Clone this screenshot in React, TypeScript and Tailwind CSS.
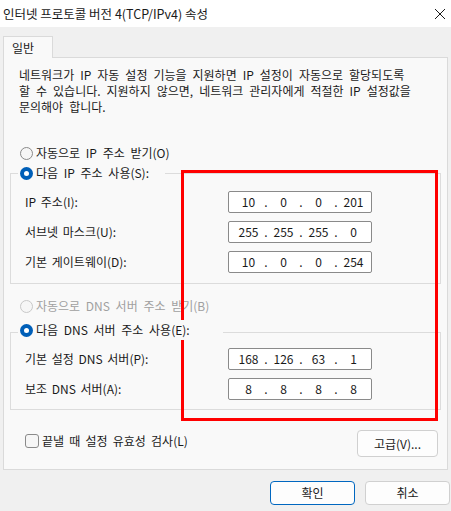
import React from "react";

const font = { fontFamily: '"Noto Sans CJK KR", "Noto Sans", sans-serif' };

function Radio({ checked, disabled }: { checked?: boolean; disabled?: boolean }) {
  if (checked) {
    return (
      <span className="w-[13px] h-[13px] rounded-full bg-[#005fb8] flex items-center justify-center shrink-0">
        <span className="w-[5px] h-[5px] rounded-full bg-white" />
      </span>
    );
  }
  return (
    <span
      className={
        "w-[13px] h-[13px] rounded-full border bg-[#f6f6f6] shrink-0 " +
        (disabled ? "border-[#c8c8c8]" : "border-[#8a8a8a]")
      }
    />
  );
}

function IpBox({ parts }: { parts: string[] }) {
  return (
    <div className="w-[144px] h-[22px] bg-white border border-[#8a8a8a] rounded-[2px] flex items-center pl-[4px] text-[12px] text-[#1a1a1a] [word-spacing:0px]">
      {parts.map((p, i) => (
        <React.Fragment key={i}>
          <span className="w-[31px] text-center">{p}</span>
          {i < 3 && <span className="w-[4px] text-center">.</span>}
        </React.Fragment>
      ))}
    </div>
  );
}

function Row({ label, parts }: { label: string; parts: string[] }) {
  return (
    <div className="flex items-center h-[22px]">
      <span className="w-[217px] pl-[14px] whitespace-nowrap [word-spacing:2px]">{label}</span>
      <IpBox parts={parts} />
    </div>
  );
}

function Legend({ text, gap }: { text: string; gap: string }) {
  return (
    <div className="relative z-10 flex items-center h-[20px] pl-[8px]">
      <span className={"flex items-center h-[20px] bg-[#f9f9f9] pl-[2px] " + gap}>
        <Radio checked />
        <span className="ml-[3px] whitespace-nowrap [word-spacing:3px]">{text}</span>
      </span>
    </div>
  );
}

export default function App() {
  return (
    <div
      className="w-[451px] h-[511px] bg-[#f0f0f0] relative overflow-hidden text-[12px] text-[#1a1a1a] leading-[16px]"
      style={font}
    >
      {/* title bar */}
      <div className="h-[27px] bg-white flex items-center justify-between pl-[3px] pr-[3px]">
        <span className="text-[12.5px] whitespace-nowrap">인터넷 프로토콜 버전 4(TCP/IPv4) 속성</span>
        <svg width="12" height="12" viewBox="0 0 12 12" className="mr-[2px]">
          <path d="M1 1 L11 11 M11 1 L1 11" stroke="#1a1a1a" strokeWidth="1" />
        </svg>
      </div>

      <div className="px-[3px] pt-[9px]">
        {/* tab */}
        <div className="relative z-10 w-[50px] h-[22px] bg-[#f9f9f9] border border-b-0 border-[#dadada] flex items-center pl-[8px] -mb-px">
          일반
        </div>

        {/* panel */}
        <div className="h-[413px] bg-[#f9f9f9] border border-[#dadada] pt-[9px]">
          <div className="pl-[15px] whitespace-nowrap [word-spacing:3.3px]">
            <div>네트워크가 IP 자동 설정 기능을 지원하면 IP 설정이 자동으로 할당되도록</div>
            <div>할 수 있습니다. 지원하지 않으면, 네트워크 관리자에게 적절한 IP 설정값을</div>
            <div>문의해야 합니다.</div>
          </div>

          <div className="mt-[28px] h-[20px] flex items-center pl-[16px] [word-spacing:3px]">
            <Radio />
            <span className="ml-[3px]">자동으로 IP 주소 받기(O)</span>
          </div>

          <div className="px-[6px]">
            <Legend text="다음 IP 주소 사용(S):" gap="pr-[16px]" />
            <div className="-mt-[10px] h-[111px] border border-[#dcdcdc] pt-[17px] flex flex-col gap-[8px]">
              <Row label="IP 주소(I):" parts={["10", "0", "0", "201"]} />
              <Row label="서브넷 마스크(U):" parts={["255", "255", "255", "0"]} />
              <Row label="기본 게이트웨이(D):" parts={["10", "0", "0", "254"]} />
            </div>
          </div>

          <div className="mt-[12px] h-[20px] flex items-center pl-[16px] text-[#a0a0a0] [word-spacing:3px]">
            <Radio disabled />
            <span className="ml-[3px]">자동으로 DNS 서버 주소 받기(B)</span>
          </div>

          <div className="px-[6px] mt-[4px]">
            <Legend text="다음 DNS 서버 주소 사용(E):" gap="pr-[33px]" />
            <div className="-mt-[8px] h-[78px] border border-[#dcdcdc] pt-[15px] flex flex-col gap-[8px]">
              <Row label="기본 설정 DNS 서버(P):" parts={["168", "126", "63", "1"]} />
              <Row label="보조 DNS 서버(A):" parts={["8", "8", "8", "8"]} />
            </div>
          </div>

          <div className="mt-[20px] flex items-start justify-between pl-[21px] pr-[9px]">
            <div className="flex items-center pt-[3px] [word-spacing:2.5px]">
              <span className="w-[14px] h-[14px] rounded-[3px] border border-[#8a8a8a] bg-[#f6f6f6]" />
              <span className="ml-[3px]">끝낼 때 설정 유효성 검사(L)</span>
            </div>
            <button className="w-[81px] h-[27px] rounded-[4px] border border-[#d0d0d0] bg-[#fdfdfd] text-[12px]">
              고급(V)...
            </button>
          </div>
        </div>
      </div>

      {/* dialog buttons */}
      <div className="flex justify-end gap-[10px] pt-[11px] pr-[1px]">
        <button className="w-[85px] h-[24px] rounded-[4px] border border-[#0067c0] bg-[#fdfdfd] text-[12px]">
          확인
        </button>
        <button className="w-[85px] h-[24px] rounded-[4px] border border-[#d0d0d0] bg-[#fdfdfd] text-[12px]">
          취소
        </button>
      </div>

      {/* red highlight annotation */}
      <div className="absolute left-[181px] top-[170px] w-[257px] h-[251px] border-[3px] border-[#ff0000] pointer-events-none" />
    </div>
  );
}
